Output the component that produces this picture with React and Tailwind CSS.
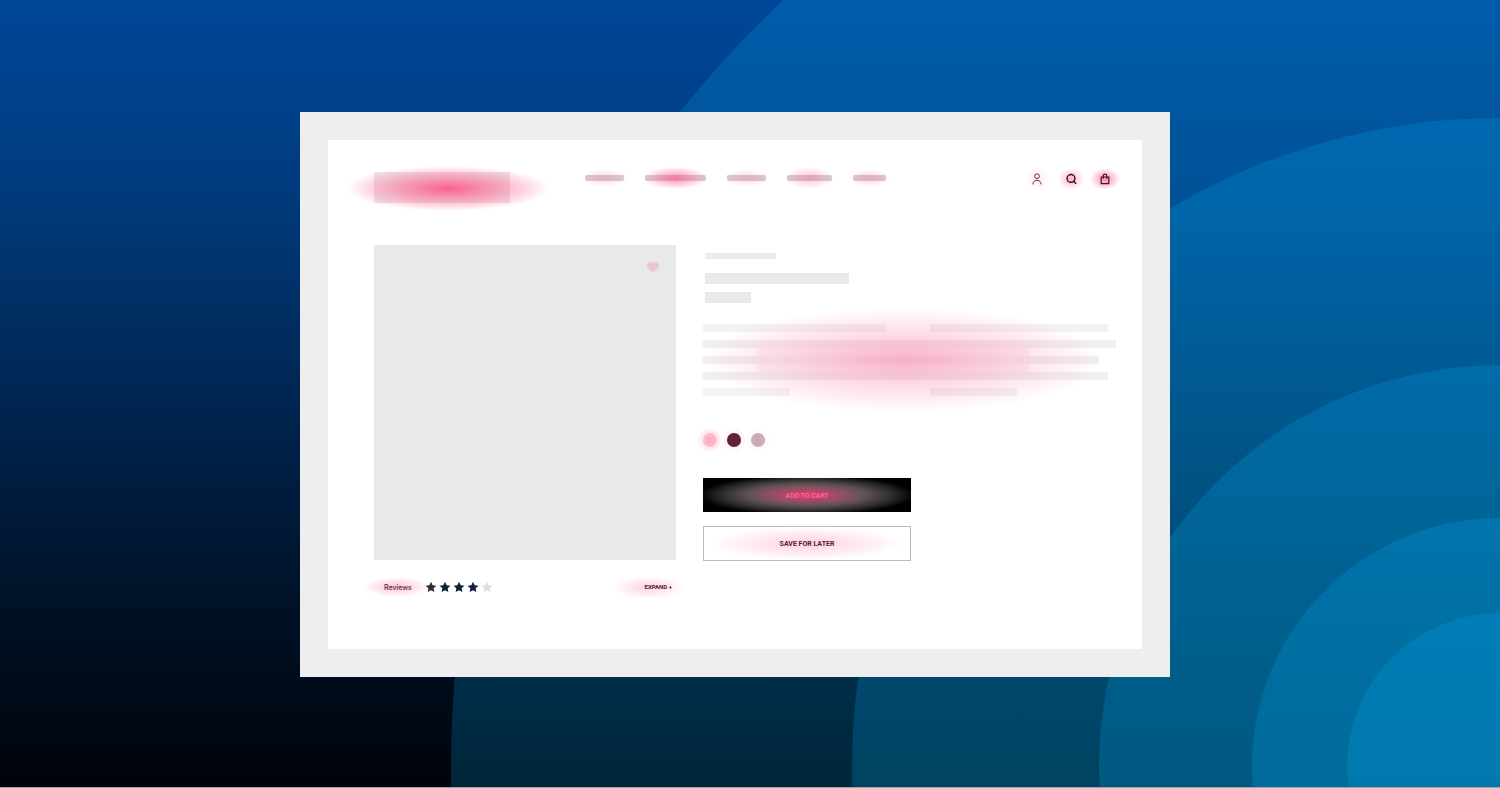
import React from 'react';
import clsx from 'clsx';

const navItems = [
  { label: 'New in', bar: 'w-[39px]', glow: '-inset-x-1 -inset-y-1.5 opacity-25' },
  { label: 'Women', bar: 'w-[61px]', glow: '-inset-x-0.5 -inset-y-2 opacity-75' },
  { label: 'Men', bar: 'w-[39px]', glow: '-inset-x-1 -inset-y-1.5 opacity-25' },
  { label: 'Home', bar: 'w-[45px]', glow: '-inset-x-0.5 -inset-y-2 opacity-40' },
  { label: 'Sale', bar: 'w-[33px]', glow: '-inset-x-1 -inset-y-1.5 opacity-30' },
];

const rings = [1049, 648, 401, 248, 153];

const swatches = [
  { label: 'Pink', color: 'bg-[#fcd0dc]', glow: '-inset-1.5 opacity-35' },
  { label: 'Burgundy', color: 'bg-[#4e1830]', glow: '-inset-1.5 opacity-20' },
  { label: 'Mauve', color: 'bg-[#c9b0b9]', glow: '-inset-1.5 opacity-10' },
];

const Glow = ({ className }) => (
  <span
    aria-hidden="true"
    className={clsx(
      'pointer-events-none absolute bg-[radial-gradient(closest-side,rgba(251,78,130,0.85),rgba(251,95,140,0.58)_40%,rgba(255,125,162,0.32)_75%,rgba(255,150,180,0))]',
      className
    )}
  />
);

const Background = () => (
  <svg
    aria-hidden="true"
    className="absolute inset-0 h-full w-full"
    viewBox="0 0 1500 787"
    preserveAspectRatio="xMaxYMax slice"
  >
    <defs>
      <linearGradient id="night" x1="0" y1="0" x2="0" y2="1">
        <stop offset="0" stopColor="#004797" />
        <stop offset="0.25" stopColor="#003a7c" />
        <stop offset="0.5" stopColor="#002652" />
        <stop offset="0.75" stopColor="#001329" />
        <stop offset="1" stopColor="#000309" />
      </linearGradient>
    </defs>
    <rect width="1500" height="787" fill="url(#night)" />
    {rings.map((r) => (
      <circle key={r} cx="1500" cy="766" r={r} fill="#00b2ff" fillOpacity="0.2" />
    ))}
  </svg>
);

const UserIcon = () => (
  <svg viewBox="0 0 14 14" className="h-3.5 w-3.5" fill="none" stroke="#6b3345" strokeWidth="1">
    <circle cx="7" cy="4.2" r="2.4" />
    <path d="M2.8 12.4c.2-2.7 1.8-4 4.2-4s4 1.3 4.2 4" />
  </svg>
);

const SearchIcon = () => (
  <svg viewBox="0 0 14 14" className="h-3.5 w-3.5" fill="none" stroke="#3a0b1c" strokeWidth="1.4">
    <circle cx="7" cy="6.4" r="3.9" />
    <path d="M9.2 8.8l2.9 2.9" />
  </svg>
);

const BagIcon = () => (
  <svg viewBox="0 0 14 14" className="h-3.5 w-3.5" fill="none" stroke="#4a0c22" strokeWidth="1.2">
    <path d="M3.2 5h7.6v6.7H3.200z" />
    <path d="M5.200 6.800V4a1.800 1.800 0 0 1 3.600 0v2.800" />
  </svg>
);

const Star = ({ className }) => (
  <svg viewBox="0 0 12 12" className={clsx('h-3 w-3', className)} fill="currentColor">
    <path d="M6 .7l1.65 3.45 3.8.5-2.8 2.6.7 3.8L6 9.2l-3.35 1.85.7-3.8-2.8-2.6 3.8-.5z" />
  </svg>
);

const Header = () => (
  <header className="flex items-start">
    <a href="#home" aria-label="Home" className="relative block h-[31px] w-[136px] bg-[#ece2e5]">
      <Glow className="-left-7 -right-10 -top-1.5 -bottom-2" />
    </a>
    <nav className="ml-[75px] flex h-3 items-center gap-[21px]">
      {navItems.map((item) => (
        <a
          key={item.label}
          href="#category"
          aria-label={item.label}
          className={clsx('relative block h-1.5 rounded-xs bg-[#d6ccd0]', item.bar)}
        >
          <Glow className={item.glow} />
        </a>
      ))}
    </nav>
    <div className="mr-1 ml-auto flex gap-5">
      <button type="button" aria-label="Account" className="relative">
        <Glow className="-inset-x-1.5 -inset-y-1 opacity-15" />
        <span className="relative block"><UserIcon /></span>
      </button>
      <button type="button" aria-label="Search" className="relative">
        <Glow className="-inset-x-1.5 -inset-y-1 opacity-50" />
        <span className="relative block"><SearchIcon /></span>
      </button>
      <button type="button" aria-label="Bag" className="relative">
        <Glow className="-inset-x-2 -inset-y-1 opacity-75" />
        <span className="relative block"><BagIcon /></span>
      </button>
    </div>
  </header>
);

const Gallery = () => (
  <div>
    <div className="relative aspect-[302/315] bg-[#e9e9e9]">
      <button type="button" aria-label="Favourite" className="absolute top-4 right-4">
        <Glow className="-inset-0.5 opacity-10" />
        <svg viewBox="0 0 14 12" className="h-3 w-3.5" fill="#e8ced6">
          <path d="M7 11.200L1.800 7C.2 4.800 1 1.800 3 1.600 5 1.400 9 1.400 11 1.600c2 .2 2.800 3.200 1.200 5.400z" />
        </svg>
      </button>
    </div>
    <div className="mt-[19px] flex h-4 items-center pr-1 pl-2.5">
      <span className="relative w-[41px] pt-0.5 text-[7px] font-medium text-[#5a2a3a]">
        <Glow className="-top-1 -right-1 -bottom-1 -left-5 opacity-40" />
        <span className="relative">Reviews</span>
      </span>
      <div className="flex gap-0.5">
        <Star className="text-[#3a2a38]" />
        <Star className="text-[#0c2530]" />
        <Star className="text-[#0c2337]" />
        <Star className="text-[#141d45]" />
        <Star className="text-[#dcdfe2]" />
      </div>
      <button type="button" className="relative ml-auto pb-0.5 font-['Roboto','Liberation_Sans',sans-serif] text-[6px] font-bold text-[#4a1a2c]">
        <Glow className="-top-1.5 -right-3 -bottom-1.5 -left-8 opacity-30" />
        <span className="relative">EXPAND +</span>
      </button>
    </div>
  </div>
);

const Description = () => (
  <div className="relative mt-[21px] space-y-2">
    <div className="flex justify-between pr-2">
      <div className="h-2 w-[45%] bg-[#f2f2f2]" />
      <div className="h-2 w-[44%] bg-[#f2f2f2]" />
    </div>
    <div className="h-2 bg-[#f0f0f0]" />
    <div className="h-2 w-[96%] bg-[#f0f0f0]" />
    <div className="h-2 w-[98%] bg-[#f0f0f0]" />
    <div className="flex">
      <div className="h-2 w-[21%] bg-[#f3f3f3]" />
      <div className="ml-[34%] h-2 w-[21%] bg-[#f3f3f3]" />
    </div>
    <div className="pointer-events-none absolute top-4 right-[21%] bottom-4 left-[13%] bg-[#f5edf0]/60" />
    <Glow className="-top-4 -bottom-4 left-0 right-3 opacity-45" />
  </div>
);

const Product = () => (
  <section className="pt-2">
    <div className="space-y-2 pl-0.5">
      <div className="mb-3.5 h-1.5 w-[71px] bg-[#ececec]" />
      <div className="h-[11px] w-36 bg-[#e9e9e9]" />
      <div className="h-[11px] w-[46px] bg-[#e9e9e9]" />
    </div>
    <Description />
    <div className="mt-[37px] flex gap-2.5">
      {swatches.map((swatch) => (
        <button
          key={swatch.label}
          type="button"
          aria-label={swatch.label}
          className={clsx('relative h-3.5 w-3.5 rounded-full', swatch.color)}
        >
          <Glow className={swatch.glow} />
        </button>
      ))}
    </div>
    <div className="mt-[31px] flex w-52 flex-col gap-3.5 font-['Roboto','Liberation_Sans',sans-serif] text-[7px]">
      <button
        type="button"
        className="relative h-[34px] bg-black bg-[radial-gradient(108px_20px_at_center,#e0406f,#b84469_20%,#86525f_38%,#5c5055_56%,#302d2e_78%,#000)] pt-0.5 text-[#ff7fa4]"
      >
        ADD TO CART
      </button>
      <button
        type="button"
        className="relative h-[35px] border border-[#b9bcbf] pt-0.5 font-bold text-[#5a1830]"
      >
        <Glow className="inset-x-2 inset-y-0 opacity-30" />
        <span className="relative">SAVE FOR LATER</span>
      </button>
    </div>
  </section>
);

const App = () => {
  return (
    <div className="relative flex min-h-screen items-center border-b border-[#9aa5ad] bg-[#000309] pt-8 pb-[30px] pl-[20%] font-['Inter','Liberation_Sans',sans-serif]">
      <Background />
      <div className="relative w-[72.5%] bg-[#eeeeee] p-7">
        <main className="bg-white pt-8 pr-[26px] pb-[54px] pl-[46px]">
          <Header />
          <div className="mt-[42px] grid grid-cols-[302fr_413fr] gap-[27px]">
            <Gallery />
            <Product />
          </div>
        </main>
      </div>
    </div>
  );
};

export default App;
